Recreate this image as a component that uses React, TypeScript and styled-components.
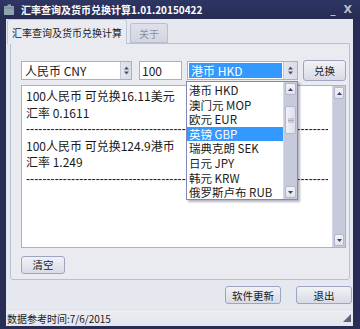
import React from "react";
import styled, { createGlobalStyle } from "styled-components";

const Global = createGlobalStyle`
  html, body { margin: 0; padding: 0; background: #272d54; }
  body { font-family: "Noto Sans CJK SC", "Noto Sans", sans-serif; }
  * { box-sizing: border-box; }
`;

const Window = styled.div`
  width: 360px;
  height: 329px;
  background: #272d54;
  display: flex;
  flex-direction: column;
  overflow: hidden;
`;

const TitleBar = styled.div`
  height: 19px;
  flex: none;
  display: flex;
  align-items: center;
  padding: 0 8px 0 3px;
  gap: 6px;
  background: linear-gradient(#2f3664, #262c52);
  color: #fff;
`;

const TitleText = styled.div`
  flex: 1;
  font-size: 10px;
  font-weight: bold;
  line-height: 19px;
  white-space: nowrap;
`;

const WinButtons = styled.div`
  display: flex;
  align-items: center;
  gap: 8px;
  color: #b9bdd0;
  font-family: "DejaVu Sans", sans-serif;
`;

const WinBtn = styled.span<{ $big?: boolean }>`
  font-size: ${(p) => (p.$big ? "11px" : "10px")};
  line-height: 12px;
  font-weight: bold;
`;

const Client = styled.div`
  flex: 1;
  margin: 0 7px 3px 6px;
  background: #e6e8ef;
  display: flex;
  flex-direction: column;
`;

const TabStrip = styled.div`
  height: 24px;
  flex: none;
  display: flex;
  align-items: flex-end;
  padding-left: 1px;
  gap: 3px;
  position: relative;
  z-index: 1;
`;

const Tab = styled.div<{ $active?: boolean }>`
  height: ${(p) => (p.$active ? "25px" : "20px")};
  margin-bottom: ${(p) => (p.$active ? "-1px" : "0")};
  padding: 0 ${(p) => (p.$active ? "4px" : "8px")};
  display: flex;
  align-items: center;
  font-size: 10px;
  color: ${(p) => (p.$active ? "#1a1a1a" : "#8c8fa0")};
  background: ${(p) => (p.$active ? "#e9ebf1" : "linear-gradient(#dfe1ea, #d2d5e1)")};
  border: 1px solid ${(p) => (p.$active ? "#c2c7d8" : "#b9bed2")};
  border-bottom: ${(p) => (p.$active ? "none" : "1px solid #b9bfd3")};
  border-radius: 3px 3px 0 0;
  white-space: nowrap;
`;

const Panel = styled.div`
  height: 237px;
  flex: none;
  margin: 0 3px 0 4px;
  background: #e9ebf1;
  border: 1px solid #b9bfd3;
  border-radius: 0 0 3px 3px;
  padding: 16px 4px 0 10px;
  display: flex;
  flex-direction: column;
`;

const Row = styled.div`
  height: 21px;
  display: flex;
  align-items: center;
  gap: 5px;
`;

const ComboWrap = styled.div<{ $w: number }>`
  position: relative;
  width: ${(p) => p.$w}px;
  height: 19px;
  flex: none;
`;

const Combo = styled.div`
  height: 19px;
  display: flex;
  background: #fff;
  border: 1px solid #a9afc8;
`;

const ComboText = styled.div<{ $sel?: boolean }>`
  flex: 1;
  margin: 1px;
  padding-left: 2px;
  font-size: 12px;
  line-height: 15px;
  white-space: nowrap;
  color: ${(p) => (p.$sel ? "#fff" : "#1a1a1a")};
  background: ${(p) => (p.$sel ? "#3399ff" : "transparent")};
`;

const Spin = styled.div<{ $w: number }>`
  width: ${(p) => p.$w}px;
  flex: none;
  display: flex;
  align-items: center;
  justify-content: center;
  background: linear-gradient(90deg, #e4e6ee, #d9dce7);
  border-left: 1px solid #c3c7d8;
`;

const Input = styled.div`
  width: 43px;
  height: 19px;
  flex: none;
  margin-left: 2px;
  background: #fff;
  border: 1px solid #a9afc8;
  font-size: 12px;
  line-height: 17px;
  padding-left: 2px;
  color: #1a1a1a;
`;

const Button = styled.div<{ $w: number; $h?: number }>`
  width: ${(p) => p.$w}px;
  height: ${(p) => p.$h ?? 18}px;
  flex: none;
  display: flex;
  align-items: center;
  justify-content: center;
  font-size: 10.5px;
  color: #222;
  background: linear-gradient(#f1f2f7, #d8dbe7);
  border: 1px solid #9ea4c2;
  border-radius: 3px;
`;

const TextBox = styled.div`
  margin-top: 4px;
  height: 163px;
  width: 325px;
  background: #fff;
  border: 1px solid #aab0c8;
  display: flex;
`;

const TextContent = styled.div`
  flex: 1;
  padding: 2px 0 0 4px;
  font-size: 12px;
  line-height: 16.6px;
  color: #1a1a1a;
  overflow: hidden;
`;

const Line = styled.div`
  white-space: nowrap;
  overflow: hidden;
`;

const Dash = styled.div`
  white-space: nowrap;
  overflow: hidden;
  font-family: "Liberation Sans", sans-serif;
  letter-spacing: 0.1px;
  margin-right: 4px;
`;

const ScrollBar = styled.div<{ $w: number }>`
  width: ${(p) => p.$w}px;
  flex: none;
  display: flex;
  flex-direction: column;
  justify-content: space-between;
  background: #c6cadb;
  border-left: 1px solid #d6d9e5;
  padding: 1px;
`;

const ScrollBtn = styled.div`
  height: 12px;
  display: flex;
  align-items: center;
  justify-content: center;
  background: linear-gradient(#f3f4f8, #dfe2eb);
  border: 1px solid #b2b7cc;
  border-radius: 2px;
`;

const Thumb = styled.div`
  height: 28px;
  display: flex;
  align-items: center;
  justify-content: center;
  background: linear-gradient(90deg, #f1f2f7, #dcdfe9);
  border: 1px solid #b2b7cc;
  border-radius: 2px;
`;

const ScrollMid = styled.div`
  flex: 1;
  padding-top: 11px;
`;

const DropList = styled.div`
  position: absolute;
  left: -1px;
  top: 20px;
  width: 112px;
  height: 119px;
  background: #fff;
  border: 1px solid #7f88b6;
  box-shadow: 2px 2px 2px rgba(40, 45, 80, 0.35);
  display: flex;
  z-index: 5;
`;

const Items = styled.div`
  flex: 1;
  padding-top: 1px;
  overflow: hidden;
`;

const Item = styled.div<{ $sel?: boolean }>`
  height: 14.6px;
  padding-left: 2px;
  font-size: 11.5px;
  line-height: 14.6px;
  white-space: nowrap;
  color: ${(p) => (p.$sel ? "#fff" : "#1a1a1a")};
  background: ${(p) => (p.$sel ? "#3399ff" : "transparent")};
`;

const BottomRow = styled.div`
  height: 29px;
  flex: none;
  display: flex;
  align-items: center;
  justify-content: flex-end;
  gap: 15px;
  padding: 1px 1px 0 0;
`;

const StatusBar = styled.div`
  flex: 1;
  display: flex;
  align-items: center;
  justify-content: space-between;
  padding: 0 2px 0 1px;
  border-top: 1px solid #dfe1e9;
  background: linear-gradient(#eceef3, #e4e6ed);
  font-size: 10px;
  color: #1a1a1a;
`;

const Up = () => (
  <svg width="5" height="3" viewBox="0 0 5 3">
    <path d="M0 3 L2.5 0 L5 3 Z" fill="#3e4460" />
  </svg>
);
const Down = () => (
  <svg width="5" height="3" viewBox="0 0 5 3">
    <path d="M0 0 L2.5 3 L5 0 Z" fill="#3e4460" />
  </svg>
);
const SpinArrows = () => (
  <svg width="5" height="9" viewBox="0 0 5 9">
    <path d="M0 3.5 L2.5 0.5 L5 3.5 Z M0 5.5 L2.5 8.5 L5 5.5 Z" fill="#4a5070" />
  </svg>
);
const Grip = () => (
  <svg width="6" height="5" viewBox="0 0 6 5">
    <path d="M0 1 H6 M0 2.5 H6 M0 4 H6" stroke="#9aa0b8" strokeWidth="0.8" />
  </svg>
);

const dash = "-".repeat(90);

const items = [
  "港币 HKD",
  "澳门元 MOP",
  "欧元 EUR",
  "英镑 GBP",
  "瑞典克朗 SEK",
  "日元 JPY",
  "韩元 KRW",
  "俄罗斯卢布 RUB",
];

export default function App() {
  return (
    <Window>
      <Global />
      <TitleBar>
        <svg width="12" height="13" viewBox="0 0 12 13">
          <path d="M1 3 H4 L5 1.5 H8 V3 H11 V12 H1 Z" fill="#8ea3ad" />
          <path d="M1 5 H11" stroke="#6f8792" strokeWidth="1" />
        </svg>
        <TitleText>汇率查询及货币兑换计算1.01.20150422</TitleText>
        <WinButtons>
          <WinBtn>_</WinBtn>
          <WinBtn $big>X</WinBtn>
        </WinButtons>
      </TitleBar>
      <Client>
        <TabStrip>
          <Tab $active>汇率查询及货币兑换计算</Tab>
          <Tab>关于</Tab>
        </TabStrip>
        <Panel>
          <Row>
            <ComboWrap $w={111}>
              <Combo>
                <ComboText>人民币 CNY</ComboText>
                <Spin $w={11}>
                  <SpinArrows />
                </Spin>
              </Combo>
            </ComboWrap>
            <Input>100</Input>
            <ComboWrap $w={111}>
              <Combo>
                <ComboText $sel>港币 HKD</ComboText>
                <Spin $w={14}>
                  <SpinArrows />
                </Spin>
              </Combo>
              <DropList>
                <Items>
                  {items.map((t) => (
                    <Item key={t} $sel={t === "英镑 GBP"}>
                      {t}
                    </Item>
                  ))}
                </Items>
                <ScrollBar $w={14}>
                  <ScrollBtn>
                    <Up />
                  </ScrollBtn>
                  <ScrollMid>
                    <Thumb>
                      <Grip />
                    </Thumb>
                  </ScrollMid>
                  <ScrollBtn>
                    <Down />
                  </ScrollBtn>
                </ScrollBar>
              </DropList>
            </ComboWrap>
            <Button $w={43} $h={21}>兑换</Button>
          </Row>
          <TextBox>
            <TextContent>
              <Line>100人民币 可兑换16.11美元</Line>
              <Line>汇率 0.1611</Line>
              <Dash>{dash}</Dash>
              <Line>100人民币 可兑换124.9港币</Line>
              <Line>汇率 1.249</Line>
              <Dash>{dash}</Dash>
            </TextContent>
            <ScrollBar $w={13}>
              <ScrollBtn>
                <Up />
              </ScrollBtn>
              <ScrollBtn>
                <Down />
              </ScrollBtn>
            </ScrollBar>
          </TextBox>
          <Row style={{ marginTop: 6 }}>
            <Button $w={44}>清空</Button>
          </Row>
        </Panel>
        <BottomRow>
          <Button $w={56}>软件更新</Button>
          <Button $w={56}>退出</Button>
        </BottomRow>
        <StatusBar>
          <span>数据参考时间:7/6/2015</span>
          <svg width="8" height="8" viewBox="0 0 8 8">
            <path d="M8 0 V8 H0 Z" fill="#5d637e" />
          </svg>
        </StatusBar>
      </Client>
    </Window>
  );
}
